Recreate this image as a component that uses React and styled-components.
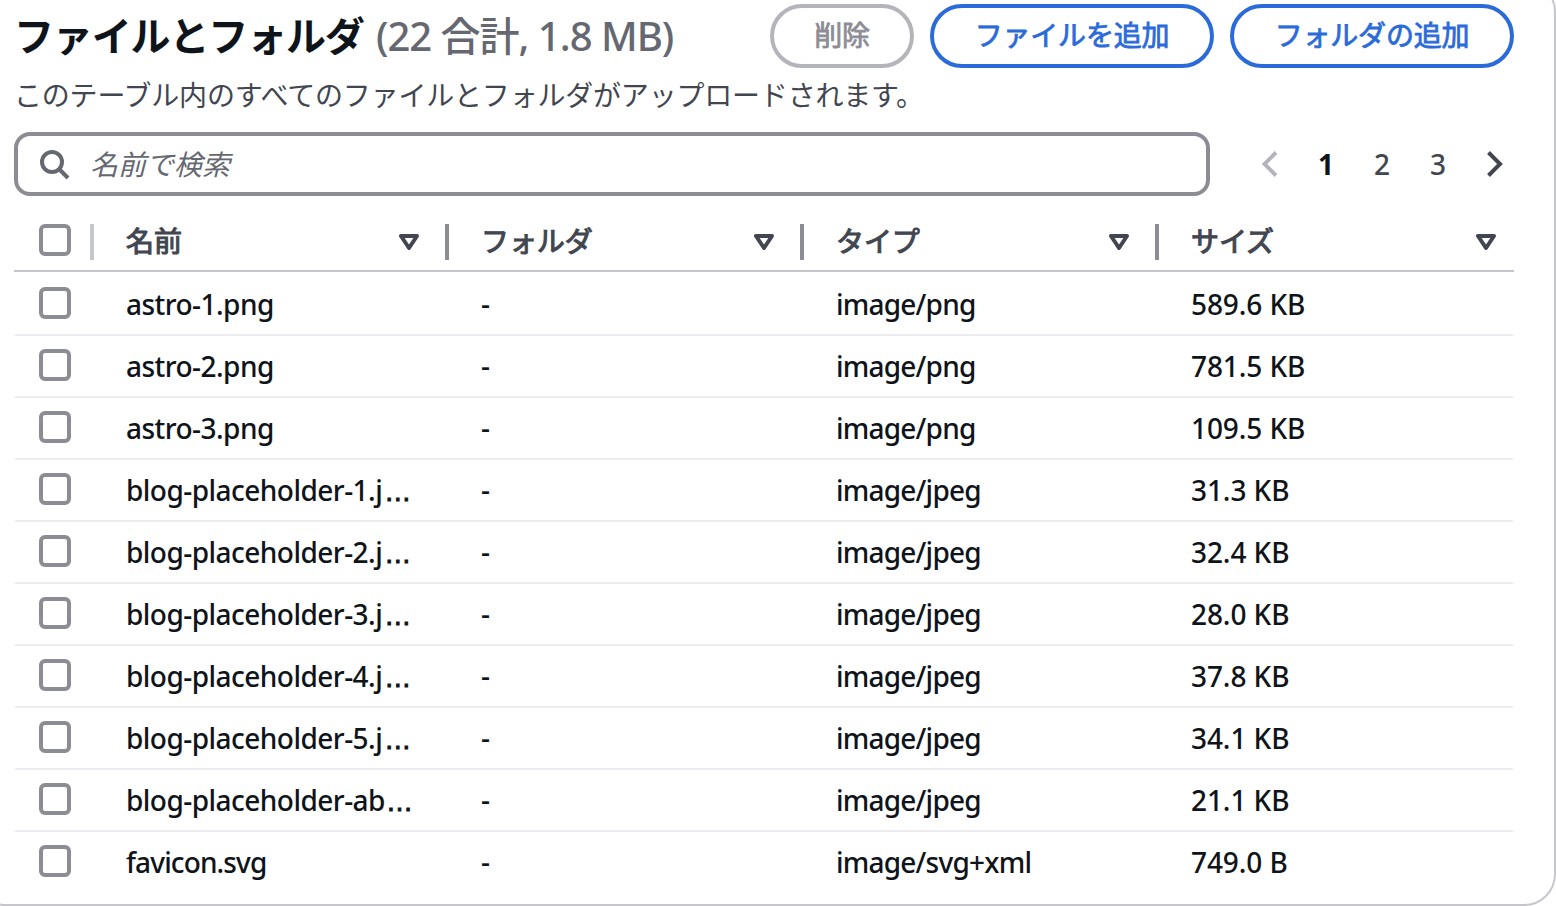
import React from "react";
import styled, { createGlobalStyle } from "styled-components";

const Global = createGlobalStyle`
  * { box-sizing: border-box; }
  body {
    margin: 0;
    background: #fff;
    color: #0f141a;
    font-family: "Noto Sans", "Noto Sans CJK JP", sans-serif;
    font-size: 28px;
    overflow: hidden;
  }
`;

const Viewport = styled.main`
  width: 1556px;
  height: 906px;
  overflow: hidden;
`;

const Card = styled.section`
  width: 1582px;
  height: 926px;
  margin: -20px 0 0 -26px;
  padding: 22px 40px 0 38px;
  border: 2px solid #c6c6cd;
  border-radius: 32px;
`;

const Header = styled.header`
  display: flex;
  justify-content: space-between;
  height: 64px;
`;

const Title = styled.h2`
  margin: 0;
  font-size: 40px;
  font-weight: 700;
  line-height: 64px;
  letter-spacing: -1.15px;
  white-space: pre;
`;

const Counter = styled.span`
  margin-left: 3px;
  color: #656871;
  font-weight: 500;
  letter-spacing: -1px;
`;

const Actions = styled.div`
  display: flex;
  gap: 16px;
`;

const Button = styled.button`
  width: ${(p) => p.$width}px;
  height: 64px;
  padding: 0 0 4px;
  border: 4px solid ${(p) => (p.disabled ? "#b4b4bb" : "#2b6bd9")};
  border-radius: 32px;
  background: #fff;
  color: ${(p) => (p.disabled ? "#8c8c94" : "#2b6bd9")};
  font: 400 28px/52px "Noto Sans CJK JP", sans-serif;
  letter-spacing: -0.2px;
  -webkit-text-stroke: 0.8px currentColor;
`;

const Description = styled.p`
  margin: 6px 0 0;
  height: 42px;
  line-height: 42px;
  color: #424650;
  letter-spacing: -0.2px;
`;

const Tools = styled.div`
  display: flex;
  align-items: center;
  justify-content: space-between;
  margin-top: 16px;
  height: 64px;
`;

const SearchBox = styled.label`
  display: flex;
  align-items: center;
  gap: 20px;
  width: 1196px;
  height: 64px;
  padding-left: 20px;
  border: 4px solid #8c8c94;
  border-radius: 16px;
`;

const SearchInput = styled.input`
  flex: 1;
  padding: 0 0 2px;
  border: 0;
  outline: 0;
  background: transparent;
  font: italic 400 28px/52px "Noto Sans CJK JP", sans-serif;
  &::placeholder { color: #656871; opacity: 1; }
`;

const Pager = styled.nav`
  display: flex;
  align-items: center;
  padding-right: 11px;
`;

const PageItem = styled.span`
  display: flex;
  align-items: center;
  justify-content: ${(p) => p.$align || "center"};
  width: ${(p) => p.$width || 56}px;
  color: ${(p) => (p.$active ? "#0f141a" : "#424650")};
  font-weight: ${(p) => (p.$active ? 700 : 500)};
`;

const Table = styled.div`
  margin-top: 16px;
`;

const Row = styled.div`
  display: grid;
  grid-template-columns: 80px repeat(4, 355px);
  height: 62px;
`;

const HeadRow = styled(Row)`
  height: 60px;
  border-bottom: 2px solid #c6c6cd;
  margin-bottom: 2px;
`;

const BodyRow = styled(Row)`
  border-bottom: 2px solid ${(p) => (p.$last ? "transparent" : "#ebebf0")};
  border-left: 2px solid transparent;
  border-right: 2px solid transparent;
  grid-template-columns: 78px repeat(4, 355px);
`;

const HeadCell = styled.div`
  display: flex;
  align-items: flex-start;
  justify-content: space-between;
  padding: 12px 0 0 ${(p) => (p.$select ? 25 : 32)}px;
`;

const HeadLabel = styled.span`
  flex: 1;
  color: #424650;
  font-family: "Noto Sans CJK JP", sans-serif;
  font-weight: 400;
  -webkit-text-stroke: 1.1px currentColor;
  line-height: 36px;
  margin-top: -2px;
  letter-spacing: -0.1px;
`;

const Divider = styled.i`
  width: 4px;
  height: 36px;
  margin-left: ${(p) => (p.$light ? 0 : 26)}px;
  background: ${(p) => (p.$light ? "#c6c6cd" : "#8c8c94")};
`;

const SortIcon = styled.svg`
  margin: 10px ${(p) => (p.$last ? 18 : 0)}px 0 0;
`;

const Checkbox = styled.span`
  display: block;
  width: 32px;
  height: 32px;
  border: 4px solid #8c8c94;
  border-radius: 6px;
`;

const CheckCell = styled.div`
  padding: 13px 0 0 23px;
`;

const Cell = styled.div`
  padding-left: 32px;
  line-height: 60px;
  font-weight: 500;
  letter-spacing: ${(p) => p.$track || 0}px;
  white-space: nowrap;
`;

const EmptyCell = styled(Cell)`
  line-height: 58px;
`;

const Ellipsis = styled.span`
  margin-left: ${(p) => (p.$tight ? 1 : 2)}px;
  font: 27px/1 "Liberation Sans", sans-serif;
  -webkit-text-stroke: 1px currentColor;
`;

const columns = ["名前", "フォルダ", "タイプ", "サイズ"];

const files = [
  { name: "astro-1.png", type: "image/png", size: "589.6 KB" },
  { name: "astro-2.png", type: "image/png", size: "781.5 KB" },
  { name: "astro-3.png", type: "image/png", size: "109.5 KB" },
  { name: "blog-placeholder-1.j", cut: true, type: "image/jpeg", size: "31.3 KB" },
  { name: "blog-placeholder-2.j", cut: true, type: "image/jpeg", size: "32.4 KB" },
  { name: "blog-placeholder-3.j", cut: true, type: "image/jpeg", size: "28.0 KB" },
  { name: "blog-placeholder-4.j", cut: true, type: "image/jpeg", size: "37.8 KB" },
  { name: "blog-placeholder-5.j", cut: true, type: "image/jpeg", size: "34.1 KB" },
  { name: "blog-placeholder-ab", cut: true, tight: true, type: "image/jpeg", size: "21.1 KB" },
  { name: "favicon.svg", type: "image/svg+xml", size: "749.0 B", track: -0.88 },
];

const Chevron = ({ flip, color }) => (
  <svg width="16" height="28" viewBox="0 0 16 28" fill="none" stroke={color} strokeWidth="4">
    <path d={flip ? "M14 2.5 2.5 14 14 25.5" : "M1.5 2.5 13 14 1.5 25.5"} />
  </svg>
);

export default function App() {
  return (
    <Viewport>
      <Global />
      <Card>
        <Header>
          <Title>
            ファイルとフォルダ <Counter>(22 合計, 1.8 MB)</Counter>
          </Title>
          <Actions>
            <Button $width={144} disabled>削除</Button>
            <Button $width={284}>ファイルを追加</Button>
            <Button $width={284}>フォルダの追加</Button>
          </Actions>
        </Header>
        <Description>このテーブル内のすべてのファイルとフォルダがアップロードされます。</Description>
        <Tools>
          <SearchBox>
            <svg width="32" height="32" viewBox="0 0 32 32" fill="none" stroke="#656871" strokeWidth="4">
              <circle cx="14" cy="14" r="10" />
              <path d="m21 21 9 9" />
            </svg>
            <SearchInput placeholder="名前で検索" />
          </SearchBox>
          <Pager>
            <PageItem><Chevron flip color="#b4b4bb" /></PageItem>
            <PageItem $active>1</PageItem>
            <PageItem>2</PageItem>
            <PageItem>3</PageItem>
            <PageItem $width={37} $align="flex-end"><Chevron color="#424650" /></PageItem>
          </Pager>
        </Tools>
        <Table>
          <HeadRow>
            <HeadCell $select>
              <Checkbox />
              <Divider $light />
            </HeadCell>
            {columns.map((name, i) => (
              <HeadCell key={name}>
                <HeadLabel>{name}</HeadLabel>
                <SortIcon $last={i === 3} width="20" height="16" viewBox="0 0 20 16">
                  <path d="M2 2h16l-8 12Z" fill="none" stroke="#424650" strokeWidth="4" strokeLinejoin="round" />
                </SortIcon>
                {i < 3 && <Divider />}
              </HeadCell>
            ))}
          </HeadRow>
          {files.map((file, i) => (
            <BodyRow key={file.name} $last={i === files.length - 1}>
              <CheckCell><Checkbox /></CheckCell>
              <Cell $track={file.track || -0.53}>
                {file.name}
                {file.cut && <Ellipsis $tight={file.tight}>…</Ellipsis>}
              </Cell>
              <EmptyCell>-</EmptyCell>
              <Cell $track={-0.78}>{file.type}</Cell>
              <Cell $track={-0.08}>{file.size}</Cell>
            </BodyRow>
          ))}
        </Table>
      </Card>
    </Viewport>
  );
}
